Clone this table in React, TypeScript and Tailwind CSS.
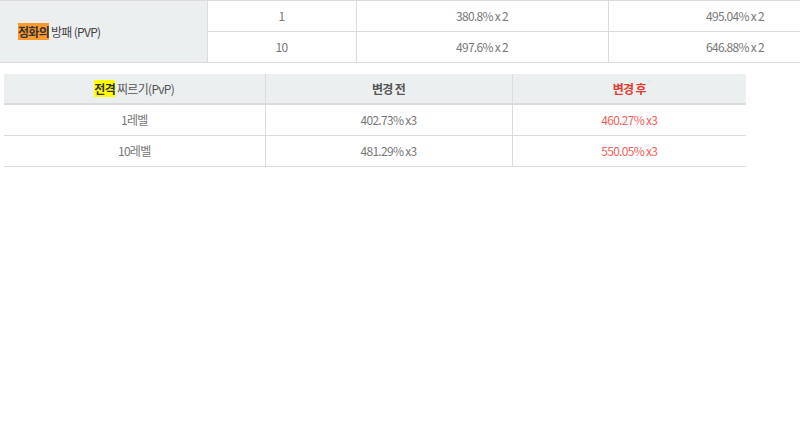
import React from 'react';

const font = { fontFamily: '"Noto Sans CJK KR", "Noto Sans", sans-serif' };

const rows1 = [
  { lv: '1', before: '380.8% x 2', after: '495.04% x 2' },
  { lv: '10', before: '497.6% x 2', after: '646.88% x 2' },
];

const rows2 = [
  { lv: '1레벨', before: '402.73% x3', after: '460.27% x3' },
  { lv: '10레벨', before: '481.29% x3', after: '550.05% x3' },
];

export default function App() {
  return (
    <div className="w-[800px] h-[428px] overflow-hidden bg-white text-[12px] tracking-[-0.7px] text-[#777]" style={font}>
      <table className="w-[862px] border-collapse table-fixed">
        <colgroup>
          <col className="w-[207px]" />
          <col className="w-[149px]" />
          <col className="w-[252px]" />
          <col className="w-[254px]" />
        </colgroup>
        <tbody>
          {rows1.map((r, i) => (
            <tr key={r.lv} className="h-[31px]">
              {i === 0 && (
                <td rowSpan={2} className="bg-[#eceff0] border border-[#dcdcdc] border-l-0 pl-[18px] text-left text-[#444]">
                  <span className="bg-[#ff9a2e] text-[#333] font-bold">정화의</span>&nbsp;방패 (PVP)
                </td>
              )}
              <td className="border border-[#dcdcdc] text-center">{r.lv}</td>
              <td className="border border-[#dcdcdc] text-center">{r.before}</td>
              <td className="border border-[#dcdcdc] text-center">{r.after}</td>
            </tr>
          ))}
        </tbody>
      </table>

      <table className="ml-[4px] mt-[11px] w-[742px] border-collapse table-fixed">
        <colgroup>
          <col className="w-[261px]" />
          <col className="w-[247px]" />
          <col className="w-[234px]" />
        </colgroup>
        <thead>
          <tr className="h-[30px] bg-[#eceff0]">
            <th className="border-b-2 border-r border-[#dcdcdc] font-normal text-[#555]">
              <span className="bg-[#ffff00] text-[#333] font-bold">전격</span>&nbsp;찌르기(PvP)
            </th>
            <th className="border-b-2 border-r border-[#dcdcdc] font-bold text-[#555]">변경&nbsp;전</th>
            <th className="border-b-2 border-[#dcdcdc] font-bold text-[#e53a2f]">변경&nbsp;후</th>
          </tr>
        </thead>
        <tbody>
          {rows2.map(r => (
            <tr key={r.lv} className="h-[31px]">
              <td className="border-b border-r border-[#dcdcdc] text-center">{r.lv}</td>
              <td className="border-b border-r border-[#dcdcdc] text-center">{r.before}</td>
              <td className="border-b border-[#dcdcdc] text-center text-[#f26158]">{r.after}</td>
            </tr>
          ))}
        </tbody>
      </table>
    </div>
  );
}
